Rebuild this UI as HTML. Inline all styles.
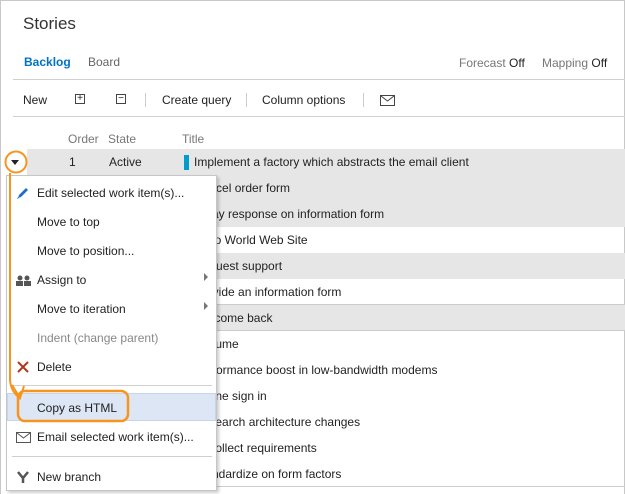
<!DOCTYPE html>
<html><head><meta charset="utf-8"><style>
*{margin:0;padding:0;box-sizing:border-box}
body{width:625px;height:494px;overflow:hidden;background:#fff;font-family:"Segoe UI","Liberation Sans",sans-serif;font-size:12px;color:#222;position:relative}
.frame{position:absolute;left:0;top:0;width:625px;height:494px;border:1px solid #c8c8c8;border-bottom:none}
.a{position:absolute;white-space:nowrap}
.hl{position:absolute;left:13px;right:0;height:1px;background:#d0d0d0}
.row{position:absolute;left:27px;right:0;height:26px}
.row .a{top:6px}
.g{background:#e6e6e6}
.menu{position:absolute;left:6px;top:175px;width:211px;height:316px;background:#fff;border:1px solid #c6c6c6;box-shadow:2px 2px 3px rgba(0,0,0,.2)}
.mi{position:absolute;left:30px;font-size:12px;white-space:nowrap}
.sep{position:absolute;left:5px;width:200px;height:1px;background:#d0d0d0}
.tri{position:absolute;left:197px;width:0;height:0;border-left:4px solid #777;border-top:4px solid transparent;border-bottom:4px solid transparent}
.vs{position:absolute;top:93px;width:1px;height:14px;background:#ccc}
</style></head><body>
<div class="frame"></div>
<div class="a" style="left:23px;top:14px;font-size:17px;color:#333">Stories</div>
<div class="a" style="left:24px;top:55px;font-weight:bold;color:#0072c6">Backlog</div>
<div class="a" style="left:88px;top:55px;color:#666">Board</div>
<div class="a" style="left:459px;top:56px;color:#777">Forecast <span style="color:#222">Off</span></div>
<div class="a" style="left:542px;top:56px;color:#777">Mapping <span style="color:#222">Off</span></div>
<div class="hl" style="top:79px"></div>
<div class="a" style="left:23px;top:93px">New</div>
<div class="a" style="left:75px;top:94px;width:10px;height:10px;border:1px solid #444;font-size:10px;line-height:8px;text-align:center">+</div>
<div class="a" style="left:116px;top:94px;width:10px;height:10px;border:1px solid #444;font-size:10px;line-height:7px;text-align:center">−</div>
<div class="vs" style="left:145px"></div>
<div class="a" style="left:162px;top:93px">Create query</div>
<div class="vs" style="left:246px"></div>
<div class="a" style="left:262px;top:93px">Column options</div>
<div class="vs" style="left:363px"></div>
<svg class="a" style="left:380px;top:95px" width="15" height="11"><rect x="0.5" y="0.5" width="14" height="10" fill="none" stroke="#444"/><path d="M1 1 L7.5 6 L14 1" fill="none" stroke="#444"/></svg>
<div class="hl" style="top:116px"></div>
<div class="a" style="left:68px;top:132px;color:#777">Order</div>
<div class="a" style="left:108px;top:132px;color:#777">State</div>
<div class="a" style="left:182px;top:132px;color:#777">Title</div>

<div class="row g" style="top:149px"><div class="a" style="left:42px">1</div><div class="a" style="left:82px">Active</div><div class="a" style="left:157px;width:5px;height:15px;background:#009ccc"></div><div class="a" style="left:167px">Implement a factory which abstracts the email client</div></div>
<div class="row g" style="top:175px"><div class="a" style="left:167px">Cancel order form</div></div>
<div class="row g" style="top:201px"><div class="a" style="left:167px">Delay response on information form</div></div>
<div class="row" style="top:227px"><div class="a" style="left:167px">Hello World Web Site</div></div>
<div class="row g" style="top:253px"><div class="a" style="left:167px">Request support</div></div>
<div class="row" style="top:279px;border-bottom:1px solid #ccc"><div class="a" style="left:167px">Provide an information form</div></div>
<div class="row g" style="top:305px;border-bottom:1px solid #ccc"><div class="a" style="left:167px">Welcome back</div></div>
<div class="row" style="top:331px"><div class="a" style="left:167px">Resume</div></div>
<div class="row" style="top:357px"><div class="a" style="left:167px">Performance boost in low-bandwidth modems</div></div>
<div class="row" style="top:383px"><div class="a" style="left:167px">Phone sign in</div></div>
<div class="row" style="top:409px"><div class="a" style="left:167px">Research architecture changes</div></div>
<div class="row" style="top:435px"><div class="a" style="left:167px">Recollect requirements</div></div>
<div class="row" style="top:461px;border-bottom:1px solid #ccc"><div class="a" style="left:167px">Standardize on form factors</div></div>

<div class="a" style="left:11px;top:160px;width:0;height:0;border-top:5px solid #222;border-left:4px solid transparent;border-right:4px solid transparent"></div>

<div class="menu">
<svg class="a" style="left:9px;top:10px" width="14" height="14"><path d="M2 12 L3 9 L10 2 L12 4 L5 11 Z" fill="#1f6fc5"/><path d="M1 13 L2 11 L3 12Z" fill="#1f6fc5"/></svg>
<div class="mi" style="top:10px">Edit selected work item(s)...</div>
<div class="mi" style="top:39px">Move to top</div>
<div class="mi" style="top:68px">Move to position...</div>
<svg class="a" style="left:9px;top:99px" width="16" height="12"><circle cx="4" cy="3" r="2.5" fill="#555"/><circle cx="11" cy="3" r="2.5" fill="#555"/><rect x="0" y="6" width="7" height="5" fill="#555"/><rect x="8" y="6" width="7" height="5" fill="#555"/></svg>
<div class="mi" style="top:97px">Assign to</div><div class="tri" style="top:97px"></div>
<div class="mi" style="top:126px">Move to iteration</div><div class="tri" style="top:126px"></div>
<div class="mi" style="top:155px;color:#888">Indent (change parent)</div>
<svg class="a" style="left:9px;top:184px" width="14" height="14"><path d="M2 2 L12 12 M12 2 L2 12" stroke="#b03a1e" stroke-width="2"/></svg>
<div class="mi" style="top:184px">Delete</div>
<div class="sep" style="top:209px"></div>
<div class="a" style="left:0;top:217px;width:209px;height:28px;background:#dce6f4;border:1px solid #c5d5ea"></div>
<div class="mi" style="top:225px">Copy as HTML</div>
<svg class="a" style="left:9px;top:256px" width="15" height="11"><rect x="0.5" y="0.5" width="14" height="10" fill="none" stroke="#555"/><path d="M1 1 L7.5 6 L14 1" fill="none" stroke="#555"/></svg>
<div class="mi" style="top:254px">Email selected work item(s)...</div>
<div class="sep" style="top:280px"></div>
<svg class="a" style="left:9px;top:294px" width="14" height="14"><path d="M2 2 L7 8 L12 2 M7 8 L7 13" stroke="#555" stroke-width="2.5" fill="none"/></svg>
<div class="mi" style="top:294px">New branch</div>
</div>

<svg class="a" style="left:0;top:0" width="625" height="494">
<circle cx="16" cy="162" r="10.5" fill="none" stroke="#f7941d" stroke-width="2"/>
<path d="M10 173 L10 380 Q11 392 20 398" fill="none" stroke="#f7941d" stroke-width="2"/>
<path d="M12 385 L20 398 L24 386" fill="none" stroke="#f7941d" stroke-width="2"/>
<rect x="18" y="391" width="110" height="30" rx="7" fill="none" stroke="#f7941d" stroke-width="2.5"/>
</svg>
</body></html>
